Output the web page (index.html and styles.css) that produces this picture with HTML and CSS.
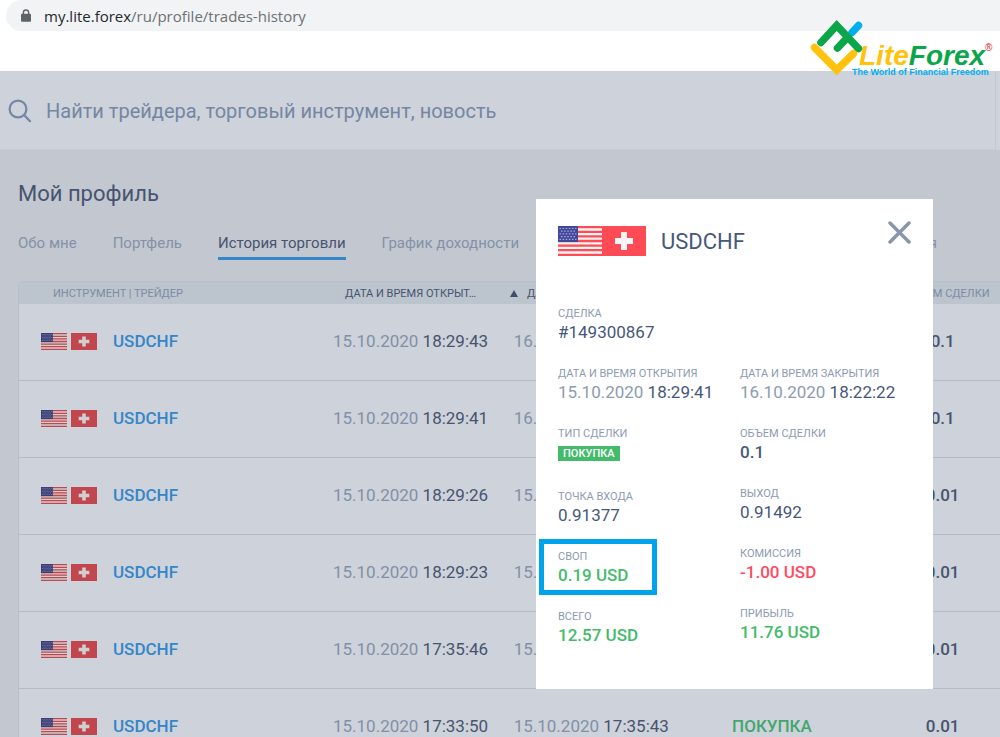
FILE: index.html
```html
<!DOCTYPE html>
<html lang="ru">
<head>
<meta charset="utf-8">
<title>Мой профиль</title>
<link rel="stylesheet" href="styles.css">
</head>
<body>
<svg class="defs" aria-hidden="true">
  <symbol id="us" viewBox="0 0 44 30" preserveAspectRatio="none">
    <rect width="44" height="30" fill="#f5f5f5"/>
    <path d="M0 1.2h44M0 5.8h44M0 10.4h44M0 15h44M0 19.6h44M0 24.2h44M0 28.8h44" stroke="#ff4b55" stroke-width="2.3"/>
    <rect width="20" height="16" fill="#41479b"/>
    <path d="M1.500 2.500h17M3 5.200h15M1.500 7.900h17M3 10.600h15M1.500 13.300h17" stroke="#a3a6d2" stroke-width="1.2" stroke-dasharray="1.6 1.500"/>
  </symbol>
  <symbol id="ch" viewBox="0 0 44 30" preserveAspectRatio="none">
    <rect width="44" height="30" fill="#ff4b55"/>
    <path d="M19 6h6v6h6v6h-6v6h-6v-6h-6v-6h6z" fill="#f5f5f5"/>
  </symbol>
</svg>

<header class="browser">
  <div class="address">
    <svg class="lock" viewBox="0 0 10 13"><path d="M2.4 6V3.6a2.6 2.6 0 0 1 5.2 0V6" fill="none" stroke="#5f6368" stroke-width="1.4"/><rect y="4.8" width="10" height="8" rx="1" fill="#5f6368"/></svg>
    <span class="url"><span class="host">my.lite.forex</span>/ru/profile/trades-history</span>
  </div>
</header>

<div class="logo">
  <svg class="mark" viewBox="0 0 54 60">
    <g fill="none" stroke-linecap="round" stroke-linejoin="round" stroke-width="7.500">
      <path d="M4.500 32.500L26.700 55L43.500 38.500" stroke="#ffc20e" stroke-linejoin="miter"/>
      <path d="M42 17.500L48.500 10.500" stroke="#00aeef"/>
      <path d="M11 27.500L26.700 10.500L48.500 33.500" stroke="#0ba64a" stroke-linejoin="miter"/>
      <path d="M27.500 33L37.500 22.500" stroke="#0ba64a"/>
    </g>
  </svg>
  <div class="brand">
    <div class="name"><span class="lite">Lite</span>Forex<sup class="reg">®</sup></div>
    <div class="slogan">The World of Financial Freedom</div>
  </div>
</div>

<form class="search">
  <svg class="lens" viewBox="0 0 24 24" fill="none" stroke="#7586a3" stroke-width="2.2" stroke-linecap="round"><circle cx="10" cy="10" r="8.4"/><path d="M16.300 16.300L22 22.200"/></svg>
  <input class="query" type="search" aria-label="Поиск" placeholder="Найти трейдера, торговый инструмент, новость">
</form>

<main class="profile">
  <h1 class="title">Мой профиль</h1>
  <nav class="tabs">
    <a class="tab" href="#about">Обо мне</a>
    <a class="tab" href="#portfolio">Портфель</a>
    <a class="tab active" href="#history">История торговли</a>
    <a class="tab" href="#chart">График доходности</a>
    <a class="tab last" href="#commission">Комиссия</a>
  </nav>
  <table class="trades">
    <colgroup><col class="c-name"><col class="c-cell"><col class="c-cell"><col class="c-cell"><col class="c-vol"></colgroup>
    <thead>
      <tr><th class="left">ИНСТРУМЕНТ | ТРЕЙДЕР</th><th class="sorted">ДАТА И ВРЕМЯ ОТКРЫТ…</th><th class="sorted close-head"><svg class="arrow" viewBox="0 0 8 7"><path d="M4 0l4 7H0z"/></svg>ДАТА И ВРЕМЯ ЗАКРЫТ…</th><th>ТИП СДЕЛКИ</th><th class="vol-head">ОБЪЕМ СДЕЛКИ</th></tr>
    </thead>
    <tbody>
      <tr><td><div class="pair"><svg class="flag"><use href="#us"/></svg><svg class="flag"><use href="#ch"/></svg><a class="symbol" href="#t1">USDCHF</a></div></td><td>15.10.2020 <b>18:29:43</b></td><td>16.10.2020 <b>18:22:24</b></td><td class="buy">ПОКУПКА</td><td class="vol">0.1</td></tr>
      <tr><td><div class="pair"><svg class="flag"><use href="#us"/></svg><svg class="flag"><use href="#ch"/></svg><a class="symbol" href="#t2">USDCHF</a></div></td><td>15.10.2020 <b>18:29:41</b></td><td>16.10.2020 <b>18:22:22</b></td><td class="buy">ПОКУПКА</td><td class="vol">0.1</td></tr>
      <tr><td><div class="pair"><svg class="flag"><use href="#us"/></svg><svg class="flag"><use href="#ch"/></svg><a class="symbol" href="#t3">USDCHF</a></div></td><td>15.10.2020 <b>18:29:26</b></td><td>15.10.2020 <b>18:35:43</b></td><td class="buy">ПОКУПКА</td><td class="vol">0.01</td></tr>
      <tr><td><div class="pair"><svg class="flag"><use href="#us"/></svg><svg class="flag"><use href="#ch"/></svg><a class="symbol" href="#t4">USDCHF</a></div></td><td>15.10.2020 <b>18:29:23</b></td><td>15.10.2020 <b>18:35:43</b></td><td class="buy">ПОКУПКА</td><td class="vol">0.01</td></tr>
      <tr><td><div class="pair"><svg class="flag"><use href="#us"/></svg><svg class="flag"><use href="#ch"/></svg><a class="symbol" href="#t5">USDCHF</a></div></td><td>15.10.2020 <b>17:35:46</b></td><td>15.10.2020 <b>17:36:43</b></td><td class="buy">ПОКУПКА</td><td class="vol">0.01</td></tr>
      <tr><td><div class="pair"><svg class="flag"><use href="#us"/></svg><svg class="flag"><use href="#ch"/></svg><a class="symbol" href="#t6">USDCHF</a></div></td><td>15.10.2020 <b>17:33:50</b></td><td>15.10.2020 <b>17:35:43</b></td><td class="buy">ПОКУПКА</td><td class="vol">0.01</td></tr>
    </tbody>
  </table>
</main>

<section class="modal" role="dialog" aria-labelledby="deal-title">
  <div class="modal-head">
    <div class="flags"><svg class="big-flag"><use href="#us"/></svg><svg class="big-flag"><use href="#ch"/></svg></div>
    <h2 class="deal-title" id="deal-title">USDCHF</h2>
    <button class="close" type="button" aria-label="Закрыть"><svg class="cross" viewBox="0 0 24 24"><path d="M3 2l19 19M22 2l-19 19" stroke="#8796ad" stroke-width="3.500" stroke-linecap="round"/></svg></button>
  </div>
  <div class="columns">
    <dl class="col">
      <div class="item"><dt>СДЕЛКА</dt><dd>#149300867</dd></div>
      <div class="item"><dt>ДАТА И ВРЕМЯ ОТКРЫТИЯ</dt><dd><span class="date">15.10.2020</span> 18:29:41</dd></div>
      <div class="item"><dt>ТИП СДЕЛКИ</dt><dd class="badge-line"><span class="badge">ПОКУПКА</span></dd></div>
      <div class="item"><dt>ТОЧКА ВХОДА</dt><dd>0.91377</dd></div>
      <div class="item marked"><dt>СВОП</dt><dd class="gain">0.19 USD</dd></div>
      <div class="item"><dt>ВСЕГО</dt><dd class="gain">12.57 USD</dd></div>
    </dl>
    <dl class="col second">
      <div class="item"><dt>ДАТА И ВРЕМЯ ЗАКРЫТИЯ</dt><dd><span class="date">16.10.2020</span> 18:22:22</dd></div>
      <div class="item"><dt>ОБЪЕМ СДЕЛКИ</dt><dd class="strong">0.1</dd></div>
      <div class="item"><dt>ВЫХОД</dt><dd>0.91492</dd></div>
      <div class="item"><dt>КОМИССИЯ</dt><dd class="loss">-1.00 USD</dd></div>
      <div class="item"><dt>ПРИБЫЛЬ</dt><dd class="gain">11.76 USD</dd></div>
    </dl>
  </div>
</section>
</body>
</html>
```

FILE: styles.css
```css
* { box-sizing: border-box; }
body { margin: 0; min-height: 100vh; position: relative; overflow: hidden; background: #c3c7d0; color: #46546f; font-family: Roboto, "Liberation Sans", sans-serif; font-size: 17px; }
h1, h2, dl, dd { margin: 0; }
a { text-decoration: none; }
.defs { position: absolute; width: 0; height: 0; }

.browser { height: 71px; padding-left: 6px; background: #fff; }
.address { display: flex; align-items: center; gap: 13px; height: 31px; padding-left: 15px; background: #f1f3f4; border-radius: 16px 0 0 16px; }
.lock { width: 10px; height: 13px; }
.url { color: #6d7175; font: 15px "Open Sans", "Noto Sans", sans-serif; }
.host { color: #25282c; }

.logo { position: absolute; top: 15px; right: 5px; display: flex; width: 185px; }
.mark { flex: none; width: 54px; height: 60px; margin-right: -12px; }
.brand { padding-top: 27px; font-family: "Liberation Sans", Arial, sans-serif; font-weight: 700; white-space: nowrap; }
.name { padding-left: 7px; color: #0ba64a; font-size: 28px; font-style: italic; line-height: 28px; }
.lite { color: #ffc20e; }
.reg { color: #e8242c; font-size: 10px; font-style: normal; font-weight: 400; line-height: 10px; vertical-align: 14px; }
.slogan { margin-top: -3px; color: #00aeef; font-size: 9px; line-height: 10px; }

.search { display: flex; align-items: center; gap: 14px; height: 79px; padding: 2px 0 0 8px; margin-right: 4px; border-right: 1px solid #c3c7d0; background: #ced2da; box-shadow: 4px 0 #ced2da; border-bottom: 1px solid #c7cbd3; }
.lens { width: 24px; height: 24px; }
.query { flex: 1; min-width: 0; padding: 0; border: 0; outline: 0; background: transparent; color: #7586a3; font: 20px Roboto, sans-serif; }
.query::placeholder { color: #7586a3; opacity: 1; }

.profile { padding: 28px 0 0 18px; }
.title { color: #46546f; font-size: 22px; font-weight: 400; line-height: 32px; }
.tabs { display: flex; gap: 36px; margin: 22px 0 21px; padding-right: 63px; }
.tab { padding-bottom: 3px; border-bottom: 3px solid transparent; color: #8491a7; font-size: 15px; line-height: 22px; white-space: nowrap; }
.tab.active { border-color: #3486c8; color: #46546f; }
.last { margin-left: auto; }

.trades { width: calc(100% + 24px); table-layout: fixed; border-collapse: separate; border-spacing: 0; border: 1px solid #b7bfca; border-radius: 4px; background: #ced2da; color: #8290a7; }
.c-name { width: 30%; }
.c-cell { width: 18%; }
.c-vol { width: 16%; }
.trades th { height: 22px; padding: 0; background: #bcc4cd; color: #7c8ca4; font-size: 11px; font-weight: 400; text-align: center; white-space: nowrap; }
.trades th.left { padding-left: 34px; text-align: left; }
.trades th.sorted { color: #46546f; }
.trades th.close-head { padding-left: 9px; text-align: left; }
.trades th.vol-head { padding-left: 8px; }
.arrow { width: 8px; height: 7px; margin-right: 9px; fill: #3d4d6c; }
.trades td { height: 77px; padding: 0 0 2px; border-bottom: 1px solid #b3bbc8; text-align: center; white-space: nowrap; }
.trades b { color: #46546f; font-weight: 400; }
.pair { display: flex; align-items: center; gap: 4px; padding-left: 22px; }
.flag { width: 26px; height: 17px; filter: brightness(.85) saturate(.8); }
.symbol { margin-left: 12px; color: #3486c8; font-weight: 500; }
.trades .buy { color: #43a66f; font-weight: 500; }
.trades .vol { color: #46546f; font-weight: 500; }

.modal { position: absolute; top: 199px; left: 536px; width: 397px; padding: 22px; background: #fff; color: #46587a; }
.modal-head { display: flex; align-items: center; height: 40px; margin-bottom: 45px; }
.flags { display: flex; }
.big-flag { width: 44px; height: 30px; }
.deal-title { flex: 1; padding-left: 15px; font-size: 22px; font-weight: 400; }
.close { align-self: flex-start; padding: 0; border: 0; background: none; cursor: pointer; line-height: 0; }
.cross { width: 24px; height: 24px; }
.columns { display: grid; grid-template-columns: 182px 1fr; padding-bottom: 22px; }
.col { display: flex; flex-direction: column; gap: 24px; }
.second { padding-top: 60px; }
dt { color: #8d9bb2; font-size: 11px; line-height: 16px; }
dd { font-size: 17px; line-height: 20px; white-space: nowrap; }
.date { color: #8d9bb2; }
.badge-line { display: flex; align-items: center; height: 23px; }
.badge { padding: 0 5px; background: #44bb6b; color: #fff; font-size: 11px; font-weight: 500; line-height: 15px; }
.marked { width: 118px; margin: -10px 0 -10px -19px; padding: 5px 14px; border: 5px solid #00a4eb; }
.strong, .gain, .loss { font-weight: 500; }
.gain { color: #44bb6b; }
.loss { color: #ff4a5f; }
```
